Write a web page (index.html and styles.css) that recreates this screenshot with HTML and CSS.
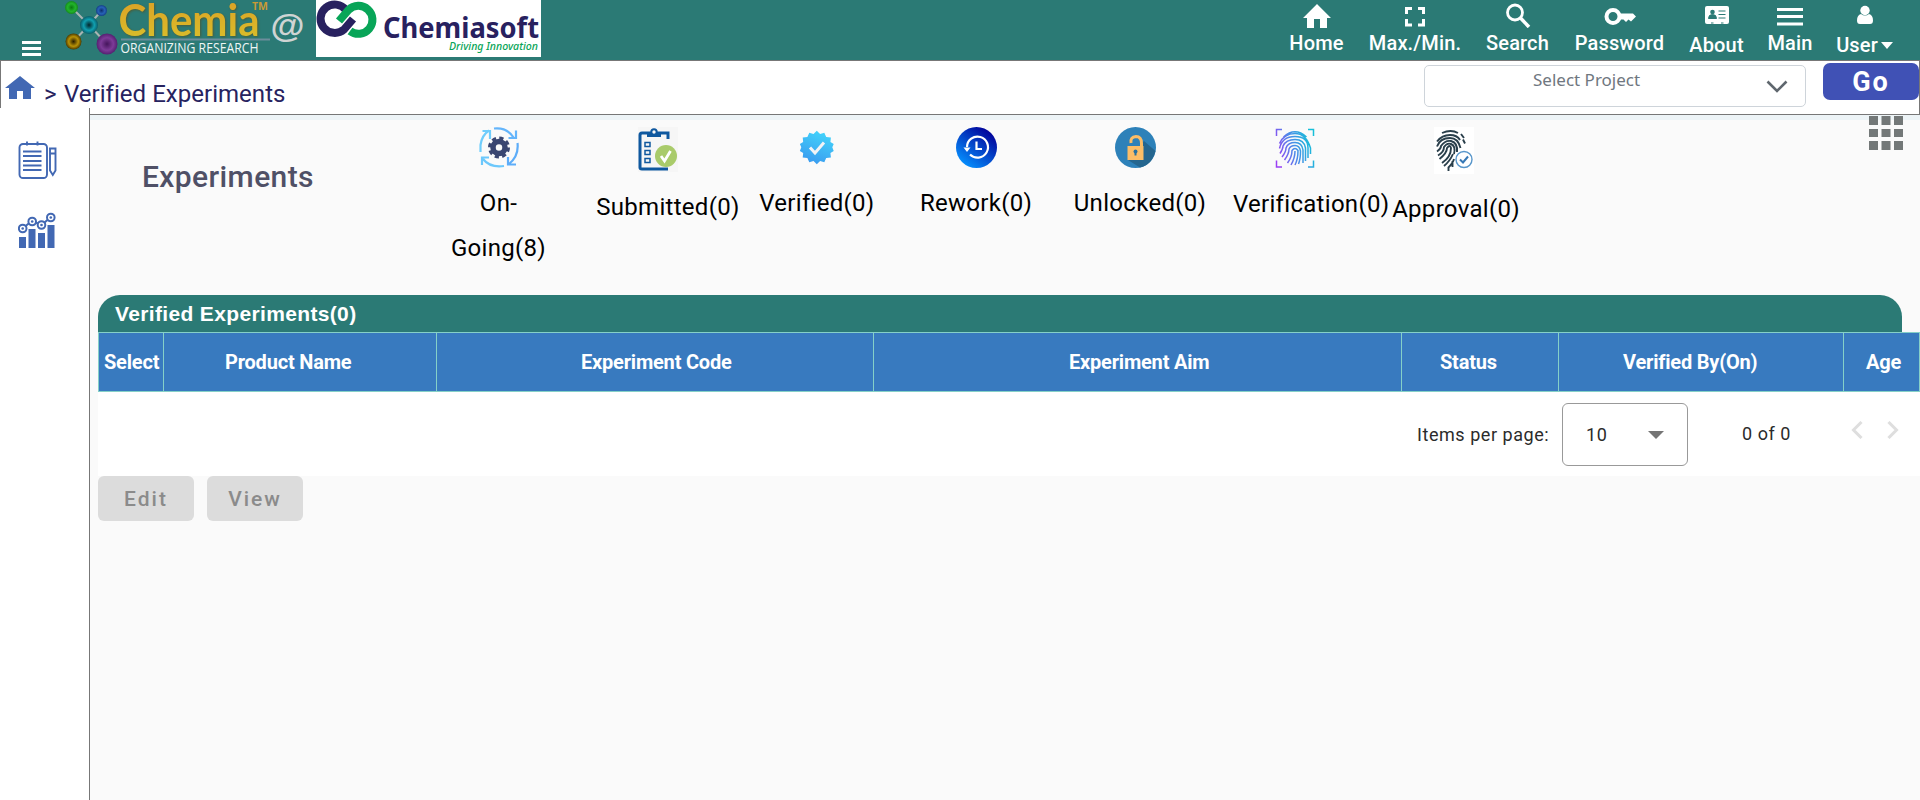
FILE: index.html
```html
<!DOCTYPE html>
<html lang="en">
<head>
<meta charset="utf-8">
<title>Verified Experiments</title>
<link rel="stylesheet" href="styles.css">
</head>
<body>
<header class="topbar">
  <svg class="brand" width="550" height="60" viewBox="0 0 550 60">
    <defs>
      <radialGradient id="gGreen"><stop offset="0" stop-color="#0a7a10"/><stop offset=".6" stop-color="#22b52c"/><stop offset="1" stop-color="#158a1c"/></radialGradient>
      <radialGradient id="gBlue"><stop offset="0" stop-color="#0d2f70"/><stop offset=".6" stop-color="#2763b8"/><stop offset="1" stop-color="#153f86"/></radialGradient>
      <radialGradient id="gCyan"><stop offset="0" stop-color="#02262c"/><stop offset=".6" stop-color="#10a0b0"/><stop offset="1" stop-color="#0a5c68"/></radialGradient>
      <radialGradient id="gGold"><stop offset="0" stop-color="#2a1f00"/><stop offset=".6" stop-color="#b99206"/><stop offset="1" stop-color="#4c3b00"/></radialGradient>
      <radialGradient id="gPurple"><stop offset="0" stop-color="#45155c"/><stop offset=".6" stop-color="#7d3b98"/><stop offset="1" stop-color="#542070"/></radialGradient>
      <linearGradient id="gText" x1="0" y1="0" x2="0" y2="1"><stop offset="0" stop-color="#dc9d25"/><stop offset="1" stop-color="#d9c12b"/></linearGradient>
    </defs>
    <path d="M22 42.500h19M22 48.500h19M22 54.500h19" stroke="#fff" stroke-width="3"/>
    <path d="M71 7L89 25L107 44M102 10L89 25L73 42" stroke="#a9b4b3" stroke-width="2" fill="none"/>
    <circle cx="71.500" cy="7.500" r="6.500" fill="url(#gGreen)"/>
    <circle cx="101.500" cy="10.500" r="5.500" fill="url(#gBlue)"/>
    <circle cx="89" cy="25" r="9" fill="url(#gCyan)"/>
    <circle cx="73.500" cy="41.500" r="8" fill="url(#gGold)"/>
    <circle cx="107" cy="44" r="10.500" fill="url(#gPurple)"/>
    <text class="chemia" x="118.500" y="35.500" fill="url(#gText)" textLength="141" lengthAdjust="spacingAndGlyphs">Chemia</text>
    <text class="tm" x="252" y="9.500" textLength="16" lengthAdjust="spacingAndGlyphs">TM</text>
    <path d="M121 39.500h149" stroke="#6d8d9c" stroke-width="2"/>
    <text class="tagline" x="120.500" y="53" textLength="138" lengthAdjust="spacingAndGlyphs">ORGANIZING RESEARCH</text>
    <text class="at-sign" x="270.500" y="36.500" textLength="34" lengthAdjust="spacingAndGlyphs">@</text>
    <rect x="316" width="225" height="57" fill="#fff"/>
    <path d="M346 10A14.200 14.200 0 1 0 344 29.500L353 19" fill="none" stroke="#28215f" stroke-width="8"/>
    <path d="M339 21L348.500 10A14 14 0 1 1 350 31" fill="none" stroke="#08a558" stroke-width="8"/>
    <text class="soft" x="383" y="38" textLength="156" lengthAdjust="spacingAndGlyphs">Chemiasoft</text>
    <text class="driving" x="449" y="49.500" textLength="89" lengthAdjust="spacingAndGlyphs">Driving Innovation</text>
  </svg>
  <nav class="tools">
    <a class="tool w-home"><svg width="28" height="28"><path d="M14 4L0 18h4v10h7V19h6v9h7V18h4z" fill="#fff"/></svg><span>Home</span></a>
    <a class="tool w-max"><svg width="20" height="28"><path d="M1.500 14V8.500H7M13 8.500h5.500V14M1.500 19v6H7M13 25h5.500v-6" fill="none" stroke="#fff" stroke-width="3"/></svg><span>Max./Min.</span></a>
    <a class="tool w-search"><svg width="26" height="28"><circle cx="10" cy="12.500" r="7.500" fill="none" stroke="#fff" stroke-width="2.800"/><path d="M15.500 18L24 27" stroke="#fff" stroke-width="3.500"/></svg><span>Search</span></a>
    <a class="tool w-pass"><svg width="32" height="28"><circle cx="9" cy="16.500" r="6.500" fill="none" stroke="#fff" stroke-width="4"/><path d="M15 13.500h14l3 3-5 5-2.500-2-2.500 2.500-2.500-2.500h-4.500z" fill="#fff"/></svg><span>Password</span></a>
    <a class="tool low w-about"><svg width="24" height="28"><path d="M2 6h20q2 0 2 2v14q0 2-2 2H2q-2 0-2-2V8q0-2 2-2z" fill="#fff"/><circle cx="7.500" cy="12" r="2.300" fill="#2b7a75"/><path d="M3.500 18.500q0-4 4-4t4 4zM13.500 11h7M13.500 14.500h7M13.500 18h7M6 23h2.500M16 23h2.500" fill="#2b7a75" stroke="#2b7a75" stroke-width="1"/></svg><span>About</span></a>
    <a class="tool w-main"><svg width="26" height="28"><path d="M0 9.500h26M0 16.500h26M0 24h26" stroke="#fff" stroke-width="3"/></svg><span>Main</span></a>
    <a class="tool low w-user"><svg width="16" height="28"><circle cx="8" cy="10.500" r="4.700" fill="#fff"/><path d="M4 14q-4 1-4 6.500Q0 24 3 24h10q3 0 3-3.500Q16 15 12 14q-4 3-8 0z" fill="#fff"/></svg><span>User<i class="caret"></i></span></a>
  </nav>
</header>

<div class="crumbbar">
  <svg class="crumb-home" width="30" height="24"><path d="M15 0L0 12h4v11h8v-8h6v8h8V12h4z" fill="#4268b3"/></svg>
  <span class="crumb-sep">&gt;</span>
  <span class="crumb-title">Verified Experiments</span>
  <div class="project"><span>Select Project</span><svg width="22" height="13"><path d="M1.500 1.500L11 11L20.500 1.500" fill="none" stroke="#5f676e" stroke-width="2.600"/></svg></div>
  <button class="go">Go</button>
</div>

<div class="body">
  <aside class="sidebar">
    <svg width="40" height="40" viewBox="0 0 40 40" fill="none" stroke="#4268b3" stroke-width="1.900">
      <rect x="1.500" y="3" width="27.500" height="34" rx="3.500"/><path d="M5 10.500h18.500M5 15h18.500M5 20h18.500M5 24.500h18.500M5 29h18.500M9 .5v4M19.500 .5v4"/>
      <path d="M32 7.500h5.500v5H32zM32 12.500h5.500v17l-2.700 4.500-2.800-4.500z"/>
    </svg>
    <svg width="40" height="38" viewBox="0 0 40 38">
      <path d="M1 25h7v11H1zM10.500 17h7v19h-7zM20 21h7v15h-7zM29.500 13h7v23h-7z" fill="#4268b3"/>
      <g fill="#fff" stroke="#4268b3" stroke-width="2"><path d="M5 16l9-7 9.500 4 9.500-8"/><circle cx="4.700" cy="16.500" r="3.800"/><circle cx="14.200" cy="9.500" r="3.800"/><circle cx="23.500" cy="13" r="3.800"/><circle cx="32.800" cy="5.500" r="3.800"/></g>
      <g fill="#4268b3"><circle cx="4.700" cy="16.500" r="1.300"/><circle cx="14.200" cy="9.500" r="1.300"/><circle cx="23.500" cy="13" r="1.300"/><circle cx="32.800" cy="5.500" r="1.300"/></g>
    </svg>
  </aside>
  <main class="content">
    <section class="summary">
      <h1>Experiments</h1>
      <div class="tabs">
        <div class="tab"><svg width="40" height="41" viewBox="0 0 40 41">
          <g fill="none" stroke-width="2.200"><path d="M1.500 25V18Q3 8 10 3.500M3.500 4h7.500v8" stroke="#6fcdfc"/><path d="M15 1.500Q28 0 35 11M37 3.500v7.500h-7.500" stroke="#64b5fb"/><path d="M38.500 16Q40 29 30 37M37 37.500h-8v-7.500" stroke="#5dadf9"/><path d="M25 39Q11 41 4 32M3 38v-7.500h7" stroke="#6cc8fc"/></g>
          <circle cx="20" cy="20.500" r="6" fill="none" stroke="#3a4671" stroke-width="5.500"/><circle cx="20" cy="20.500" r="9.500" fill="none" stroke="#3a4671" stroke-width="3" stroke-dasharray="4.200 3.260"/></svg><span>On-Going(8)</span></div>
        <div class="tab"><svg width="40" height="45" viewBox="0 0 40 45"><rect width="40" height="45" fill="#f6f6f6"/>
          <path d="M30 12V6H4q-2 0-2 2v32.500q0 1.500 2 1.500h26" fill="none" stroke="#0f589f" stroke-width="3"/><path d="M9 5h4q3-5 6 0h4v5H9z" fill="#0f589f"/><circle cx="16" cy="5" r="2.700" fill="#f6f6f6" stroke="#0f589f" stroke-width="2"/>
          <path d="M7 15.500h5v4H7zM7 23.500h5v4H7zM7 31.500h5v4H7z" fill="none" stroke="#0f589f" stroke-width="1.500"/><circle cx="28" cy="29" r="11" fill="#a9cb6a"/><path d="M23 29l3.500 5 6-10" fill="none" stroke="#fff" stroke-width="2.800"/></svg><span>Submitted(0)</span></div>
        <div class="tab"><svg width="40" height="41" viewBox="0 0 40 41"><defs><linearGradient id="gBadge" x1=".7" y1="0" x2=".3" y2="1"><stop offset="0" stop-color="#43d5fb"/><stop offset="1" stop-color="#3999ef"/></linearGradient></defs>
          <path transform="translate(1 1) scale(.94)" d="M20 3l3.500 3.500L28 5l2 4.500 5 .5-.500 5 3.500 2-1.500 3.500 1.500 4-3.500 2 .5 5-5 .5-2 4.500-4.500-1.500L20 38.500l-3.500-3.500L12 36.500 10 32l-5-.5.500-5L2 24.500l1.500-4L2 17l3.500-2L5 10l5-.5L12 5l4.500 1.500z" fill="url(#gBadge)"/><path d="M13 20.500l5 5.500 9-10.500" fill="none" stroke="#f1f3f6" stroke-width="3"/></svg><span>Verified(0)</span></div>
        <div class="tab"><svg width="41" height="41" viewBox="0 0 41 41"><defs><linearGradient id="gRe" x1=".8" y1=".1" x2=".2" y2=".9"><stop offset="0" stop-color="#02049b"/><stop offset="1" stop-color="#058cfb"/></linearGradient></defs>
          <circle cx="20.500" cy="20.500" r="20.500" fill="url(#gRe)"/><path d="M11 20A10.500 10.500 0 1 1 14 27.500M20.500 14.500V22H26" fill="none" stroke="#fff" stroke-width="2.200"/><path d="M7.500 20.500h7L11 25z" fill="#fff"/></svg><span>Rework(0)</span></div>
        <div class="tab"><svg width="41" height="41" viewBox="0 0 41 41"><circle cx="20.500" cy="20.500" r="20.500" fill="#2d81b9"/><path d="M29 14L40.500 24Q37 38 25 40.500L13 33z" fill="#25668f"/>
          <path d="M16 16q-1-6 5-6.500 5.500 0 5.500 7V19" fill="none" stroke="#fbbd67" stroke-width="3"/><path d="M12.500 19h16v14h-16z" fill="#fbbd67"/><circle cx="20.500" cy="24.500" r="2" fill="#28719f"/><path d="M19.500 25h2v3.500h-2z" fill="#28719f"/></svg><span>Unlocked(0)</span></div>
        <div class="tab"><svg width="40" height="42" viewBox="0 0 40 42"><defs><linearGradient id="gFp" gradientUnits="userSpaceOnUse" x1="2" y1="30" x2="38" y2="18"><stop offset="0" stop-color="#9b3ff4"/><stop offset=".5" stop-color="#4a8ee8"/><stop offset="1" stop-color="#16bfd9"/></linearGradient></defs>
          <g fill="none" stroke="url(#gFp)" stroke-width="1.500"><path d="M1.500 9V2.500H7M33 2.500h5.500V9M1.500 33.500V40H7M33 40h5.500v-6.500"/><path d="M8.500 10Q20 -.5 31.500 10M4.500 16.500Q9 6.500 20 6.500T35.500 21v6M4.500 21.500Q7 9.500 20 9.500T33 21v10M5 26.500Q8 22 8 19Q11 12.500 20 12.500T30.500 21v13M7 30Q11 25 11 21Q13 15.500 20 15.500T28 23v13M9.500 33Q14 27 14 22Q15.500 18.500 20 18.500T25.500 24q0 8-2 13M12.500 36Q17 30 17 23.500q3-4 6 0Q23 32 20 38M16 38Q20 31 20 24"/></g></svg><span>Verification(0)</span></div>
        <div class="tab"><svg width="40" height="47" viewBox="0 0 40 47"><rect width="40" height="47" fill="#fff"/>
          <g fill="none" stroke="#2a3f4b" stroke-width="1.900"><path d="M8 6Q17 2 24 6M27 7l3 4M3 14.500Q8 8 16 8q7 0 10 5M29 12.500l2 4M3 19.500Q6 11 16 11q8 0 10.500 10M3 24.500Q7 22 7 19q4-6 10-5 7 2 6 11M4 28.500Q10 25 10 20q3-4.500 7-3 5 2 3 10M5.500 32Q13 26 13 21q3-4 4 0Q17 30 8 36M19 27q-3 7-9 12M20 32q-1 4-6 9M14.500 44v-4M18.500 40v-6"/></g>
          <circle cx="30" cy="32.500" r="8" fill="#fff" stroke="#5896ca" stroke-width="1.400"/><path d="M26 32.500l3 3 5-6" fill="none" stroke="#3678b5" stroke-width="2"/></svg><span>Approval(0)</span></div>
      </div>
      <svg class="apps" width="34" height="34"><path d="M0 0h9v9H0zM12.500 0h9v9h-9zM25 0h9v9h-9zM0 13h9v8H0zM12.500 13h9v8h-9zM25 13h9v8h-9zM0 25h9v9H0zM12.500 25h9v9h-9zM25 25h9v9h-9z" fill="#737878"/></svg>
    </section>

    <section class="listing">
      <h2>Verified Experiments(0)</h2>
      <div class="thead">
        <div class="th c1">Select</div><div class="th c2">Product Name</div><div class="th c3">Experiment Code</div><div class="th c4">Experiment Aim</div><div class="th c5">Status</div><div class="th c6">Verified By(On)</div><div class="th c7">Age</div>
      </div>
      <div class="pager">
        <span class="per">Items per page:</span>
        <div class="size"><span>10</span><i class="caret"></i></div>
        <span class="range">0 of 0</span>
        <svg class="arrows" width="48" height="18" fill="none" stroke="#dedede" stroke-width="3"><path d="M10.500 1L2.500 9L10.500 17M37.500 1L45.500 9L37.500 17"/></svg>
      </div>
      <div class="actions"><button>Edit</button><button>View</button></div>
    </section>
  </main>
</div>
</body>
</html>
```
FILE: styles.css
```css
* { box-sizing: border-box; }
html { overflow: hidden; }
body { margin: 0; height: 800px; overflow: hidden; background: #fff; font-family: Roboto, "Liberation Sans", sans-serif; }
svg { display: block; flex: none; }
button { border: 0; font-family: inherit; }

.topbar { height: 60px; display: flex; justify-content: space-between; background: #2b7a75; color: #fff; }
.chemia { font: bold 43px Lato, sans-serif; filter: drop-shadow(1px 1px 1px #4b5d3a); }
.tm { font: bold 10px "Open Sans", sans-serif; fill: #c99a35; }
.tagline { font: 14px "Open Sans", sans-serif; fill: #eef6f5; }
.at-sign { font: bold 34px "Liberation Sans", sans-serif; fill: #cfd4d3; }
.soft { font: bold 28.500px "Noto Sans", sans-serif; fill: #28215f; }
.driving { font: italic 500 11px "Noto Sans", sans-serif; fill: #08a558; }

.tools { display: flex; gap: 25px; padding-right: 28px; }
.tool { display: flex; flex-direction: column; align-items: center; font-size: 20px; font-weight: 500; line-height: 24px; letter-spacing: .15px; white-space: nowrap; }
.tool span { margin-top: 3px; }
.tool.low span { margin-top: 5px; }
.w-home { width: 55px; }
.w-max { width: 92px; }
.w-search { width: 63px; }
.w-pass { width: 91px; }
.w-about { width: 53px; }
.w-main { width: 44px; }
.w-user { width: 55px; }
.caret { display: inline-block; border: 6px solid transparent; border-top: 7px solid currentColor; border-bottom: 0; }
.tool .caret { margin-left: 3px; vertical-align: 3px; }

.crumbbar { height: 55px; display: flex; align-items: flex-start; padding: 0 0 0 4px; border: 1px solid #777; background: #fff; color: #27235f; font-size: 24px; line-height: 28px; }
.crumb-home { margin-top: 15px; }
.crumb-sep { margin: 19px 0 0 9px; width: 20px; }
.crumb-title { margin-top: 19px; letter-spacing: .03px; }
.project { display: flex; align-items: flex-start; width: 382px; height: 42px; margin: 4px 17px 0 auto; padding: 0 17px 0 108px; border: 1px solid #ced4da; border-radius: 5px; justify-content: space-between; color: #6f7780; font: 17px/28px "Noto Sans", sans-serif; }
.project svg { margin-top: 14px; }
.go { width: 96px; height: 37px; margin-top: 2px; padding: 0; border-radius: 7px; background: #4051b5; color: #fff; font-size: 27px; font-weight: 700; line-height: 39px; letter-spacing: 2px; }

.body { display: flex; height: 692px; margin-top: -7px; }
.sidebar { position: relative; width: 90px; padding: 33px 0 0 18px; display: flex; flex-direction: column; gap: 31px; background: #fff; border-right: 1px solid #777; }
.content { width: 1830px; margin-top: 7px; border-top: 5px solid #edf4f7; background: #fafafa; }

.summary { display: flex; height: 175px; padding-left: 52px; align-items: flex-start; }
.summary h1 { width: 296px; margin: 37px 0 0; font-size: 30px; font-weight: 500; line-height: 40px; color: #4f5066; letter-spacing: .4px; }
.tabs { display: flex; gap: 37.200px; margin-top: 7px; }
.tab { width: 122px; font-size: 24px; line-height: 45px; text-align: center; color: #000; letter-spacing: .3px; }
.tab svg { margin: 0 auto 13px; }
.tab span { display: block; margin-left: -1px; }
.apps { margin: -4px 17px 0 auto; }

.listing { padding-left: 8px; }
.listing h2 { width: 1804px; height: 37px; margin: 0; padding-left: 17px; border-radius: 22px 22px 0 0; background: #2b7a75; color: #fff; font: bold 21px/38px "Liberation Sans", sans-serif; letter-spacing: .35px; }
.thead { display: flex; height: 60px; border: 1px solid #85d0c8; background: #387abf; color: #fff; font-size: 20px; font-weight: 700; line-height: 58px; letter-spacing: -.2px; white-space: nowrap; }
.th { border-right: 1px solid #85d0c8; }
.th:last-child { border-right: 0; }
.c1 { width: 65px; padding-left: 5px; }
.c2 { width: 273px; padding-left: 61px; }
.c3 { width: 437px; padding-left: 144px; }
.c4 { width: 528px; padding-left: 195px; }
.c5 { width: 157px; padding-left: 38px; }
.c6 { width: 285px; padding-left: 64px; }
.c7 { flex: 1; padding-left: 22px; }
.pager { display: flex; height: 84px; padding-right: 21px; justify-content: flex-end; background: #fff; color: #2b2b2b; font-size: 18px; line-height: 24px; letter-spacing: .55px; white-space: nowrap; }
.per { width: 145px; margin-top: 31px; }
.size { display: flex; justify-content: space-between; align-items: center; width: 126px; height: 63px; margin-top: 11px; padding: 0 23px; border: 1px solid #999; border-radius: 6px; }
.size .caret { border-width: 8px 8px 0; color: #757575; }
.range { width: 109px; margin: 30px 0 0 54px; }
.arrows { margin-top: 29px; }
.actions { display: flex; gap: 13px; }
.actions button { width: 96px; height: 45px; padding: 0; border-radius: 6px; background: #dcdcdc; color: #8b8b8b; font-size: 21px; font-weight: 500; letter-spacing: 2px; }
```
